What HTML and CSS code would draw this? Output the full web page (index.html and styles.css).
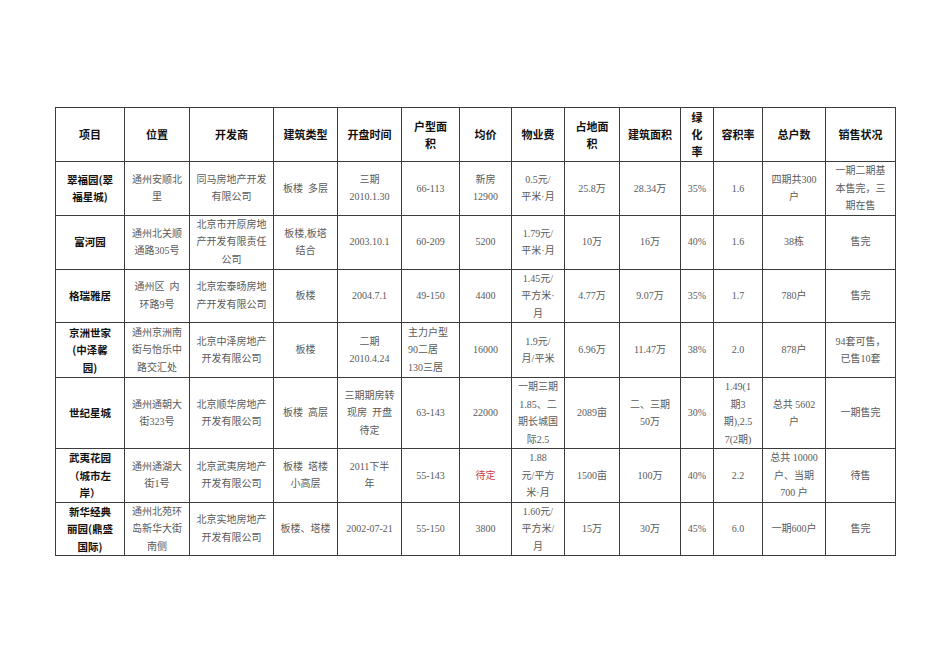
FILE: index.html
```html
<!DOCTYPE html>
<html lang="zh">
<head>
<meta charset="utf-8">
<link rel="stylesheet" href="styles.css">
</head>
<body>
<div class="page">
<table class="sheet">
<colgroup>
<col class="c1"><col class="c2"><col class="c3"><col class="c4"><col class="c5"><col class="c6"><col class="c7"><col class="c8"><col class="c9"><col class="c10"><col class="c11"><col class="c12"><col class="c13"><col class="c14">
</colgroup>
<thead>
<tr class="rh">
<th>项目</th><th>位置</th><th>开发商</th><th>建筑类型</th><th>开盘时间</th><th>户型面<br>积</th><th>均价</th><th>物业费</th><th>占地面<br>积</th><th>建筑面积</th><th>绿<br>化<br>率</th><th>容积率</th><th>总户数</th><th>销售状况</th>
</tr>
</thead>
<tbody>
<tr class="r1">
<td class="name">翠福园(翠<br>福星城)</td><td>通州安顺北<br>里</td><td>同马房地产开发<br>有限公司</td><td>板楼&nbsp; 多层</td><td>三期<br>2010.1.30</td><td>66-113</td><td>新房<br>12900</td><td>0.5元/<br>平米·月</td><td>25.8万</td><td>28.34万</td><td>35%</td><td>1.6</td><td>四期共300<br>户</td><td>一期二期基<br>本售完，三<br>期在售</td>
</tr>
<tr class="r2">
<td class="name">富河园</td><td>通州北关顺<br>通路305号</td><td>北京市开原房地<br>产开发有限责任<br>公司</td><td>板楼,板塔<br>结合</td><td>2003.10.1</td><td>60-209</td><td>5200</td><td>1.79元/<br>平米·月</td><td>10万</td><td>16万</td><td>40%</td><td>1.6</td><td>38栋</td><td>售完</td>
</tr>
<tr class="r3">
<td class="name">格瑞雅居</td><td>通州区&nbsp; 内<br>环路9号</td><td>北京宏泰旸房地<br>产开发有限公司</td><td>板楼</td><td>2004.7.1</td><td>49-150</td><td>4400</td><td>1.45元/<br>平方米·<br>月</td><td>4.77万</td><td>9.07万</td><td>35%</td><td>1.7</td><td>780户</td><td>售完</td>
</tr>
<tr class="r4">
<td class="name">京洲世家<br>(中泽馨<br>园)</td><td>通州京洲南<br>街与怡乐中<br>路交汇处</td><td>北京中泽房地产<br>开发有限公司</td><td>板楼</td><td>二期<br>2010.4.24</td><td class="left">主力户型<br>90二居<br>130三居</td><td>16000</td><td>1.9元/<br>月/平米</td><td>6.96万</td><td>11.47万</td><td>38%</td><td>2.0</td><td>878户</td><td>94套可售，<br>已售10套</td>
</tr>
<tr class="r5">
<td class="name">世纪星城</td><td>通州通朝大<br>街323号</td><td>北京顺华房地产<br>开发有限公司</td><td>板楼&nbsp; 高层</td><td>三期期房转<br>现房&nbsp; 开盘<br>待定</td><td>63-143</td><td>22000</td><td>一期三期<br>1.85、二<br>期长城国<br>际2.5</td><td>2089亩</td><td>二、三期<br>50万</td><td>30%</td><td>1.49(1<br>期3<br>期),2.5<br>7(2期)</td><td>总共 5602<br>户</td><td>一期售完</td>
</tr>
<tr class="r6">
<td class="name">武夷花园<br>（城市左<br>岸）</td><td>通州通湖大<br>街1号</td><td>北京武夷房地产<br>开发有限公司</td><td>板楼&nbsp; 塔楼<br>小高层</td><td>2011下半<br>年</td><td>55-143</td><td class="red">待定</td><td>1.88<br>元/平方<br>米·月</td><td>1500亩</td><td>100万</td><td>40%</td><td>2.2</td><td>总共 10000<br>户、当期<br>700 户</td><td>待售</td>
</tr>
<tr class="r7">
<td class="name">新华经典<br>丽园(鼎盛<br>国际)</td><td>通州北苑环<br>岛新华大街<br>南侧</td><td>北京实地房地产<br>开发有限公司</td><td>板楼、塔楼</td><td>2002-07-21</td><td>55-150</td><td>3800</td><td>1.60元/<br>平方米/<br>月</td><td>15万</td><td>30万</td><td>45%</td><td>6.0</td><td>一期600户</td><td>售完</td>
</tr>
</tbody>
</table>
</div>
</body>
</html>
```

FILE: styles.css
```css
html, body {
  margin: 0;
  padding: 0;
  background: #ffffff;
}

.page {
  padding: 107px 0 0 55px;
}

.sheet {
  border-collapse: collapse;
  table-layout: fixed;
  width: 840px;
  font-family: "Liberation Serif", "Noto Sans CJK SC", serif;
  font-size: 10px;
  line-height: 17.5px;
  color: #5a5a5a;
}

.c1 { width: 69px; }
.c2 { width: 65px; }
.c3 { width: 84px; }
.c4 { width: 64px; }
.c5 { width: 64px; }
.c6 { width: 58px; }
.c7 { width: 52px; }
.c8 { width: 53px; }
.c9 { width: 55px; }
.c10 { width: 61px; }
.c11 { width: 33px; }
.c12 { width: 49px; }
.c13 { width: 63px; }
.c14 { width: 70px; }

.sheet th,
.sheet td {
  border: 1px solid #3c3c3c;
  padding: 0 2px;
  text-align: center;
  vertical-align: middle;
  white-space: nowrap;
  overflow: hidden;
}

.sheet th {
  font-family: "Noto Sans CJK SC", "Liberation Sans", sans-serif;
  font-weight: 700;
  font-size: 11px;
  line-height: 17px;
  color: #111111;
}

.sheet td.name {
  font-family: "Noto Sans CJK SC", "Liberation Sans", sans-serif;
  font-weight: 700;
  font-size: 10.5px;
  line-height: 17.5px;
  color: #111111;
}

.sheet td.left {
  text-align: left;
  padding-left: 6px;
}

.sheet td.red {
  color: #d23a3a;
}

.rh { height: 54px; }
.r1 { height: 53px; }
.r2 { height: 54px; }
.r3 { height: 52px; }
.r4 { height: 55px; }
.r5 { height: 70px; }
.r6 { height: 53px; }
.r7 { height: 53px; }
```
